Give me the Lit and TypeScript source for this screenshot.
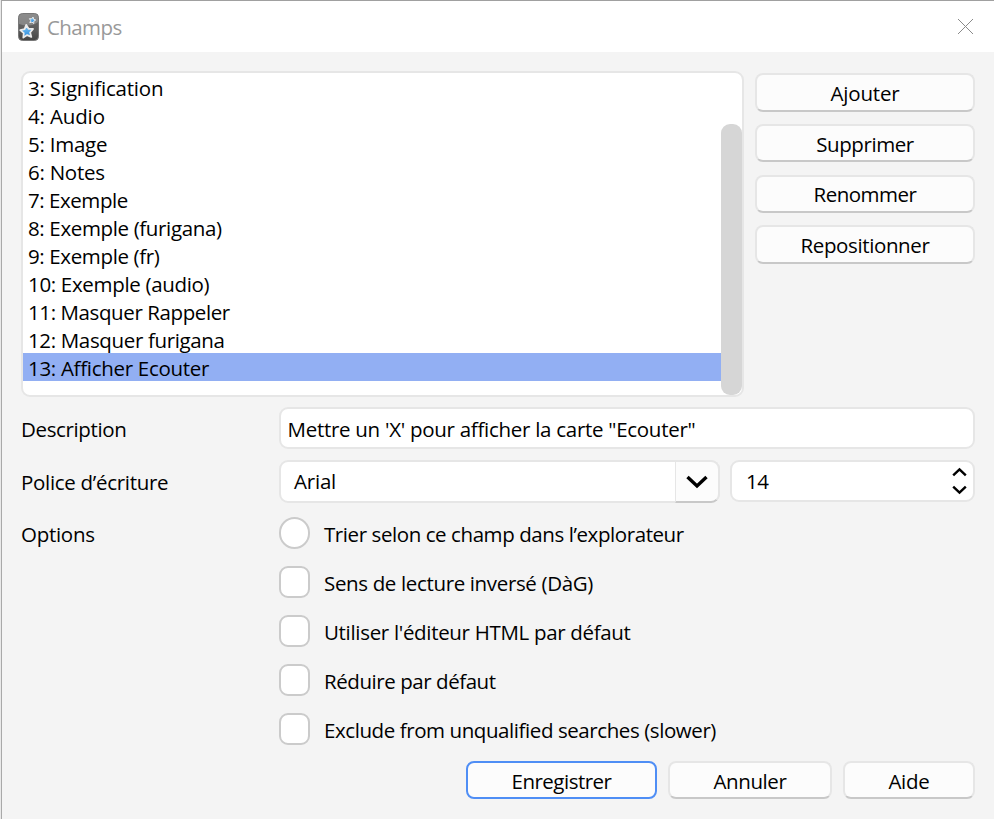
// Note type field editor: the list of fields with its actions, the
// settings of the selected field, and the dialog buttons.

import { LitElement, css, html, svg } from "lit";
import { customElement, property, state } from "lit/decorators.js";
import { classMap } from "lit/directives/class-map.js";

// [label, letter spacing in px]
type Label = [string, number];

const FIELDS: Label[] = [
  ["3: Signification", -0.19],
  ["4: Audio", -0.15],
  ["5: Image", -0.25],
  ["6: Notes", -0.25],
  ["7: Exemple", -0.45],
  ["8: Exemple (furigana)", -0.36],
  ["9: Exemple (fr)", -0.37],
  ["10: Exemple (audio)", -0.32],
  ["11: Masquer Rappeler", -0.4],
  ["12: Masquer furigana", -0.35],
  ["13: Afficher Ecouter", -0.3],
];

const ACTIONS: Label[] = [
  ["Ajouter", -0.15],
  ["Supprimer", -0.4],
  ["Renommer", -0.5],
  ["Repositionner", -0.38],
];

const OPTIONS: Label[] = [
  ["Trier selon ce champ dans l’explorateur", -0.42],
  ["Sens de lecture inversé (DàG)", -0.35],
  ["Utiliser l'éditeur HTML par défaut", -0.32],
  ["Réduire par défaut", -0.44],
  ["Exclude from unqualified searches (slower)", -0.42],
];

@customElement("tracked-text")
export class TrackedText extends LitElement {
  static override styles = css`
    :host {
      display: inline-block;
      white-space: pre;
    }
  `;

  @property({ type: Number }) spacing = 0;

  protected override render() {
    return html`<span style="letter-spacing:${this.spacing}px"><slot></slot></span>`;
  }
}

const text = ([label, spacing]: Label) =>
  html`<tracked-text .spacing=${spacing}>${label}</tracked-text>`;

const star = (transform: string) => svg`
  <path
    transform=${transform}
    d="M0 -6.4 L2 -2.3 L6.4 -1.8 L3.2 1.5 L4 6 L0 3.8 L-4 6 L-3.2 1.5 L-6.4 -1.8 L-2 -2.3 Z"
    fill="url(#blue)" stroke="#ececec" stroke-width="1.8" stroke-linejoin="round"
  />`;

@customElement("app-root")
export class AppRoot extends LitElement {
  static override styles = css`
    :host {
      display: block;
      box-sizing: border-box;
      width: 994px;
      height: 819px;
      padding-left: 1px;
      overflow: hidden;
      background: #e9e9e9;
      color: #000;
      font: 370 20.5px/28px "Open Sans", "Noto Sans", sans-serif;
    }
    * {
      box-sizing: border-box;
    }
    button {
      font: inherit;
      color: inherit;
      padding: 0;
    }
    .window {
      height: 819px;
      border-top: 1px solid #a0a0a0;
      border-left: 1px solid #a9a9a9;
      background: #f4f4f4;
    }
    header {
      display: flex;
      align-items: center;
      height: 51px;
      padding: 0 20px 0 16px;
      background: #fff;
      color: #999;
    }
    header .logo {
      margin-right: 7px;
    }
    header .close {
      margin-left: auto;
    }
    svg {
      display: block;
      flex: none;
    }
    main {
      padding: 19px 19px 0 19px;
    }
    .top {
      display: flex;
      gap: 11px;
      height: 326px;
    }
    .list {
      display: flex;
      width: 723px;
      border: 2px solid #e6e6e6;
      border-radius: 9px;
      background: #fff;
      overflow: hidden;
    }
    .rows {
      flex: 1;
    }
    .row {
      height: 28px;
      padding-left: 5px;
      line-height: 30px;
    }
    .row.selected {
      background: #92aff3;
    }
    .thumb {
      width: 21px;
      height: 271px;
      margin-top: 51px;
      border-radius: 9px;
      background: #d6d6d6;
    }
    .actions {
      display: flex;
      flex-direction: column;
      gap: 12.3px;
      flex: 1;
      padding-top: 2.2px;
    }
    .btn {
      display: flex;
      align-items: center;
      justify-content: center;
      height: 38.4px;
      padding-top: 1px;
      border: 2px solid #e6e6e6;
      border-bottom-color: #c8c8c8;
      border-radius: 8px;
      background: #fcfcfc;
    }
    .btn.default {
      border-color: #4f8ef5;
    }
    .form {
      display: grid;
      grid-template-columns: 258px 1fr;
      row-gap: 11px;
      padding-top: 10px;
    }
    .label {
      height: 42px;
      line-height: 44px;
    }
    .label.raised {
      line-height: 40px;
    }
    .control {
      display: flex;
      gap: 10px;
    }
    .box {
      display: flex;
      align-items: center;
      height: 42px;
      border: 2px solid #e6e6e6;
      border-radius: 9px;
      background: #fff;
    }
    .line {
      flex: 1;
      padding: 2px 0 0 6.5px;
    }
    .combo {
      width: 441px;
      height: 43px;
      padding-left: 13px;
      line-height: 27px;
    }
    .arrow {
      display: flex;
      align-items: center;
      justify-content: center;
      width: 45px;
      height: 43px;
      margin: -2px -2px -2px auto;
      border: 2px solid #e6e6e6;
      border-left-width: 1px;
      border-bottom-color: #c8c8c8;
      border-radius: 0 9px 9px 0;
      background: #fcfcfc;
    }
    .spin {
      flex: 1;
      padding: 0 6.5px 0 14px;
      justify-content: space-between;
    }
    .options {
      display: flex;
      flex-direction: column;
      gap: 17px;
      padding-top: 3px;
    }
    .option {
      display: flex;
      gap: 14px;
      height: 32px;
      line-height: 34px;
    }
    .mark {
      width: 31px;
      height: 32px;
      border: 2px solid #cbcbcb;
      border-radius: 9px;
      background: #fff;
    }
    .mark.radio {
      border-radius: 16px;
    }
    footer {
      display: grid;
      grid-template-columns: 191px 164px 132px;
      justify-content: end;
      gap: 11px;
      padding-top: 16px;
    }
  `;

  @state() private selected = 10;

  private logo() {
    return html`
      <svg class="logo" width="22" height="28" viewBox="0 0 22 28">
        <defs>
          <linearGradient id="body" x2="0" y2="1">
            <stop offset="0" stop-color="#6e6e6e" />
            <stop offset="0.6" stop-color="#5c5c5c" />
            <stop offset="1" stop-color="#444" />
          </linearGradient>
          <linearGradient id="blue" x2="0" y2="1">
            <stop offset="0" stop-color="#7cc6f5" />
            <stop offset="1" stop-color="#2a8ade" />
          </linearGradient>
        </defs>
        <rect x="0.5" y="0.5" width="20" height="27" rx="4" fill="url(#body)" stroke="#777" />
        <path d="M1 11 Q13 15 20 9 V5 Q20 1 16.5 1 H5 Q1 1 1 5 Z" fill="#aaa" opacity="0.5" />
        ${star("translate(8.8 18.3) rotate(-5)")} ${star("translate(14.4 7.2) rotate(12) scale(0.5)")}
      </svg>
    `;
  }

  protected override render() {
    return html`
      <div class="window">
        <header>
          ${this.logo()} ${text(["Champs", -0.6])}
          <svg class="close" width="17" height="17" viewBox="0 0 17 17">
            <path d="M1 1 L16 16 M16 1 L1 16" stroke="#8a8a8a" stroke-width="1" />
          </svg>
        </header>
        <main>
          <section class="top">
            <div class="list">
              <div class="rows">
                ${FIELDS.map(
                  (field, i) => html`
                    <div
                      class=${classMap({ row: true, selected: i === this.selected })}
                      @click=${() => (this.selected = i)}
                    >
                      ${text(field)}
                    </div>
                  `,
                )}
              </div>
              <div class="thumb"></div>
            </div>
            <div class="actions">
              ${ACTIONS.map((a) => html`<button type="button" class="btn">${text(a)}</button>`)}
            </div>
          </section>
          <section class="form">
            <div class="label">${text(["Description", -0.36])}</div>
            <div class="control">
              <div class="box line">
                ${text(["Mettre un 'X' pour afficher la carte \"Ecouter\"", -0.28])}
              </div>
            </div>
            <div class="label">${text(["Police d’écriture", -0.3])}</div>
            <div class="control">
              <div class="box combo">
                ${text(["Arial", -0.2])}
                <div class="arrow">
                  <svg width="22" height="14" viewBox="0 0 22 14">
                    <path d="M1.5 2 L11 11 L20.5 2" fill="none" stroke="#000" stroke-width="3.4" />
                  </svg>
                </div>
              </div>
              <div class="box spin">
                ${text(["14", -0.5])}
                <svg width="15" height="28" viewBox="0 0 15 28">
                  <path
                    d="M1.2 8.4 L7.5 2.3 L13.8 8.4 M1.2 19.6 L7.5 25.7 L13.8 19.6"
                    fill="none" stroke="#000" stroke-width="2.4"
                  />
                </svg>
              </div>
            </div>
            <div class="label raised">${text(["Options", -0.28])}</div>
            <div class="options">
              ${OPTIONS.map(
                (option, i) => html`
                  <div class="option">
                    <span class=${classMap({ mark: true, radio: i === 0 })}></span>
                    ${text(option)}
                  </div>
                `,
              )}
            </div>
          </section>
          <footer>
            <button type="button" class="btn default">${text(["Enregistrer", -0.5])}</button>
            <button type="button" class="btn">${text(["Annuler", -0.4])}</button>
            <button type="button" class="btn">${text(["Aide", -0.25])}</button>
          </footer>
        </main>
      </div>
    `;
  }
}
